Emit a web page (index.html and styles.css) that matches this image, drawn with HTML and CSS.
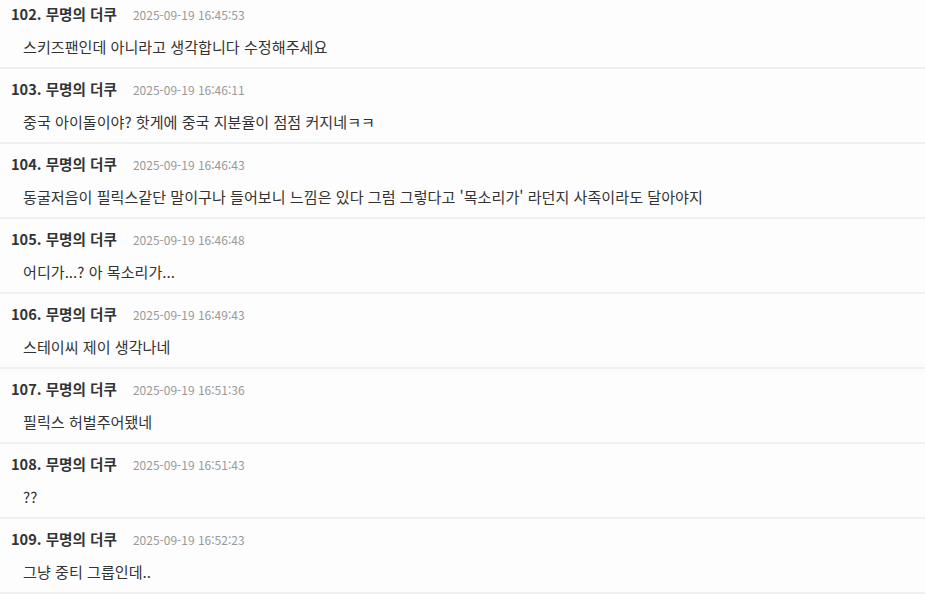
FILE: index.html
```html
<!DOCTYPE html>
<html lang="ko">
  <head>
    <meta charset="utf-8" />
    <title>댓글</title>
    <link rel="stylesheet" href="styles.css">
  </head>

  <body>
    <ul class="comments">
      <li class="comment">
        <div class="meta"><span class="name">102. 무명의 더쿠</span><span class="date">2025-09-19 16:45:53</span></div>
        <p class="text">스키즈팬인데 아니라고 생각합니다 수정해주세요</p>
      </li>
      <li class="comment">
        <div class="meta"><span class="name">103. 무명의 더쿠</span><span class="date">2025-09-19 16:46:11</span></div>
        <p class="text">중국 아이돌이야? 핫게에 중국 지분율이 점점 커지네ㅋㅋ</p>
      </li>
      <li class="comment">
        <div class="meta"><span class="name">104. 무명의 더쿠</span><span class="date">2025-09-19 16:46:43</span></div>
        <p class="text">동굴저음이 필릭스같단 말이구나 들어보니 느낌은 있다 그럼 그렇다고 '목소리가' 라던지 사족이라도 달아야지</p>
      </li>
      <li class="comment">
        <div class="meta"><span class="name">105. 무명의 더쿠</span><span class="date">2025-09-19 16:46:48</span></div>
        <p class="text">어디가...? 아 목소리가...</p>
      </li>
      <li class="comment">
        <div class="meta"><span class="name">106. 무명의 더쿠</span><span class="date">2025-09-19 16:49:43</span></div>
        <p class="text">스테이씨 제이 생각나네</p>
      </li>
      <li class="comment">
        <div class="meta"><span class="name">107. 무명의 더쿠</span><span class="date">2025-09-19 16:51:36</span></div>
        <p class="text">필릭스 허벌주어됐네</p>
      </li>
      <li class="comment">
        <div class="meta"><span class="name">108. 무명의 더쿠</span><span class="date">2025-09-19 16:51:43</span></div>
        <p class="text">??</p>
      </li>
      <li class="comment">
        <div class="meta"><span class="name">109. 무명의 더쿠</span><span class="date">2025-09-19 16:52:23</span></div>
        <p class="text">그냥 중티 그룹인데..</p>
      </li>
    </ul>
  </body>
</html>
```

FILE: styles.css
```css
html {
  font-family: "Noto Sans CJK KR", "Noto Sans", sans-serif;
  background: #fdfdfd;
  color: #333;
}

body {
  margin: 0;
}

/* list is scrolled a few pixels past its top */
.comments {
  list-style: none;
  margin: -6px 0 0;
  padding: 0;
}

.comment {
  padding: 10px 10px 11px 11px;
  border-bottom: 2px solid #f0f0f0;
}

.meta {
  display: flex;
  align-items: baseline;
  gap: 16px;
  height: 20px;
  line-height: 20px;
}

.name {
  font-size: 14.6px;
  font-weight: bold;
  color: #333;
}

.date {
  font-size: 12px;
  color: #999;
}

.text {
  margin: 12px 0 0 12px;
  font-size: 15.1px;
  line-height: 20px;
  color: #333;
}
```
